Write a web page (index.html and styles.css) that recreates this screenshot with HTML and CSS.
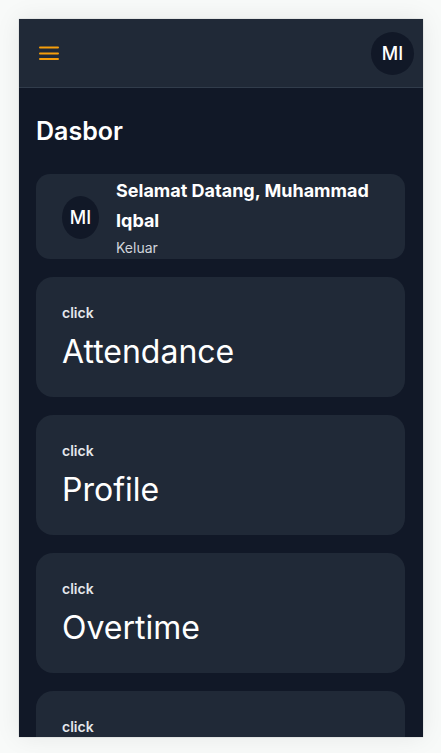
FILE: index.html
```html
<!doctype html>
<html lang="id">
<head>
<meta charset="utf-8">
<meta name="viewport" content="width=device-width,initial-scale=1">
<title>Dasbor</title>
<link rel="stylesheet" href="styles.css">
</head>
<body>

<div class="app">
  <header class="topbar">
    <button type="button" class="menu-btn" aria-label="Menu">
      <svg viewBox="0 0 24 24" fill="none" stroke="currentColor" stroke-width="2" stroke-linecap="round">
        <path d="M3 6.5h18M3 12.5h18M3 18h18"/>
      </svg>
    </button>
    <button type="button" class="avatar">MI</button>
  </header>

  <main>
    <h1>Dasbor</h1>

    <section class="card welcome">
      <div class="avatar">MI</div>
      <div class="welcome-text">
        <h2>Selamat Datang, Muhammad Iqbal</h2>
        <button type="button" class="logout">Keluar</button>
      </div>
    </section>

    <a href="#attendance" class="card stat">
      <span class="label">click</span>
      <span class="value">Attendance</span>
    </a>
    <a href="#profile" class="card stat">
      <span class="label">click</span>
      <span class="value">Profile</span>
    </a>
    <a href="#overtime" class="card stat">
      <span class="label">click</span>
      <span class="value">Overtime</span>
    </a>
    <a href="#" class="card stat">
      <span class="label">click</span>
    </a>
  </main>
</div>

</body>
</html>
```

FILE: styles.css
```css
:root{
  --bg:#111827; --panel:#202937; --line:#313c4b; --amber:#f59e0b;
}
*{box-sizing:border-box;margin:0;padding:0}
body{
  font-family:Inter,'Liberation Sans',sans-serif;background:#f8faf9;color:#fff;
  height:100vh;padding:19px 18px 16px 19px
}
button{font:inherit;color:inherit;background:none;border:none;cursor:pointer}

.app{
  height:100%;overflow:auto;scrollbar-width:none;background:var(--bg);
  box-shadow:0 0 24px rgba(0,0,0,.08),0 0 1px rgba(0,0,0,.3)
}
.topbar{
  display:flex;justify-content:space-between;align-items:center;
  height:69px;padding:0 9px 0 18px;
  background:var(--panel);border-bottom:1px solid var(--line)
}
.menu-btn{width:24px;height:24px;color:var(--amber)}
.menu-btn svg{display:block;width:100%;height:100%}

.avatar{
  display:flex;align-items:center;justify-content:center;
  width:43px;height:43px;border-radius:50%;
  background:var(--bg);font-size:18px;font-weight:500
}

main{display:flex;flex-direction:column;gap:18px;padding:26px 18px 26px 17px}
h1{font-size:25px;line-height:34px;font-weight:600;margin-bottom:8px}

.card{background:var(--panel);border-radius:17px;padding:26px 26px 20px}
.welcome{display:flex;align-items:center;gap:17px;padding:2px 26px 0;border-radius:14px}
.welcome .avatar{width:37px;flex:none}
.welcome-text{flex:1}
h2{font-size:18px;line-height:30px;font-weight:700}
.logout{display:block;font-size:14px;line-height:23px;color:#d1d5db}

.stat{display:flex;flex-direction:column;gap:4px;color:#fff;text-decoration:none;min-height:120px}
.label{font-size:14px;line-height:20px;font-weight:600;color:#e5e7eb}
.value{font-size:32px;line-height:50px}
```
